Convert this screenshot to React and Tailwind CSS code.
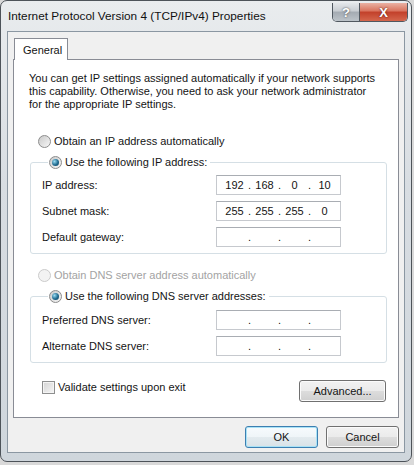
import React from 'react';

// Windows 7 style radio button
function Radio({ checked, disabled }) {
  return (
    <span
      className={`w-[13px] h-[13px] rounded-full border flex items-center justify-center shrink-0 ${
        disabled
          ? 'border-[#cbcbcb] bg-[#f3f3f3]'
          : 'border-[#8c8c8c] bg-[linear-gradient(135deg,#c9c9c9,#f7f7f7)]'
      }`}
    >
      {checked && (
        <span className="w-[7px] h-[7px] rounded-full bg-[radial-gradient(circle_at_35%_35%,#9adcf3,#1f6a8f_55%,#0e3f5a)]" />
      )}
    </span>
  );
}

// Four-part IP address box
function IpField({ value }) {
  const parts = value ? value.split('.') : ['', '', '', ''];
  return (
    <div className="w-[125px] h-[20px] border border-[#c6c9ce] border-t-[#a9adb3] bg-white flex items-center pl-[4px]">
      {parts.map((p, i) => (
        <React.Fragment key={i}>
          {i > 0 && <span className="w-[3px] text-center">.</span>}
          <span className="w-[27px] text-center">{p}</span>
        </React.Fragment>
      ))}
    </div>
  );
}

function FieldRow({ label, value }) {
  return (
    <div className="flex items-center">
      <span className="w-[174px]">{label}</span>
      <IpField value={value} />
    </div>
  );
}

const buttonClass =
  'h-[22px] rounded-[3px] border border-[#707070] bg-[linear-gradient(#f2f2f2_0%,#ebebeb_49%,#dddddd_50%,#cfcfcf_100%)] shadow-[inset_0_0_0_1px_#fbfbfb] flex items-center justify-center';

export default function App() {
  return (
    <div className="w-[414px] h-[465px] bg-[#d9d9d9] overflow-hidden font-['Liberation_Sans',sans-serif] text-[11px] leading-[13px] text-[#141414]">
      {/* Window frame */}
      <div className="w-[412px] h-[462px] rounded-[7px] border border-[#4d5359] bg-[linear-gradient(to_bottom,#e9ecee,#d8dde2_40%,#cfd6dc)] flex flex-col">
        {/* Title bar */}
        <div className="h-[30px] flex items-start pl-[7px]">
          <span className="mt-[9px] text-[11.8px] text-[#111]">Internet Protocol Version 4 (TCP/IPv4) Properties</span>
          <div className="ml-auto mt-[2px] mr-[3px] flex h-[19px] border border-[#505860] border-t-0 rounded-b-[5px] overflow-hidden">
            <div className="w-[27px] h-full bg-[linear-gradient(#e4e7ea_0%,#c8cdd2_45%,#a4abb2_50%,#bcc3c9_100%)] flex items-center justify-center text-white font-bold text-[13px] [text-shadow:0_0_2px_#333] border-r border-[#505860]">
              ?
            </div>
            <div className="w-[47px] h-full bg-[linear-gradient(#eab1a3_0%,#d9735d_45%,#c2402a_50%,#d4664c_100%)] flex items-center justify-center text-white font-bold text-[13px] [text-shadow:0_0_2px_#4a1008]">
              X
            </div>
          </div>
        </div>

        {/* Client area */}
        <div className="mx-[6px] h-[422px] border border-[#8b97a2] bg-[#f0f0f0] flex flex-col px-[5px] pt-[6px]">
          {/* Tab strip */}
          <div className="flex pl-[1px]">
            <div className="relative z-10 -mb-px w-[54px] h-[22px] bg-white border border-[#898c95] border-b-0 pl-[8px] pt-[5px]">
              General
            </div>
          </div>

          {/* Tab panel */}
          <div className="h-[359px] border border-[#898c95] bg-white flex flex-col pt-[12px]">
            <p className="pl-[15px]">
              You can get IP settings assigned automatically if your network supports
              <br />
              this capability. Otherwise, you need to ask your network administrator
              <br />
              for the appropriate IP settings.
            </p>

            <div className="mt-[23px] pl-[24px] flex items-center gap-[3px] h-[14px]">
              <Radio />
              <span>Obtain an IP address automatically</span>
            </div>

            <fieldset className="mt-[7px] ml-[16px] mr-[11px] border border-[#d5dfe5] rounded-[3px] pl-[11px] pr-[44px] pt-[5px] pb-[6px] flex flex-col gap-[6px]">
              <legend className="ml-[6px] pl-[1px] pr-[3px]">
                <span className="flex items-center gap-[3px] h-[15px]">
                  <Radio checked />
                  <span>Use the following IP address:</span>
                </span>
              </legend>
              <FieldRow label="IP address:" value="192.168.0.10" />
              <FieldRow label="Subnet mask:" value="255.255.255.0" />
              <FieldRow label="Default gateway:" />
            </fieldset>

            <div className="mt-[14px] pl-[24px] flex items-center gap-[3px] h-[14px] text-[#a3a3a3]">
              <Radio disabled />
              <span>Obtain DNS server address automatically</span>
            </div>

            <fieldset className="mt-[7px] ml-[16px] mr-[11px] border border-[#d5dfe5] rounded-[3px] pl-[11px] pr-[44px] pt-[6px] pb-[6px] flex flex-col gap-[6px]">
              <legend className="ml-[6px] pl-[1px] pr-[3px]">
                <span className="flex items-center gap-[3px] h-[15px]">
                  <Radio checked />
                  <span>Use the following DNS server addresses:</span>
                </span>
              </legend>
              <FieldRow label="Preferred DNS server:" />
              <FieldRow label="Alternate DNS server:" />
            </fieldset>

            <div className="mt-[17px] flex items-start pl-[28px] pr-[12px]">
              <div className="flex items-center h-[14px]">
                <span className="w-[13px] h-[13px] border border-[#8e8f8f] bg-[linear-gradient(135deg,#d4d4d4,#f6f6f6)] shadow-[inset_0_0_0_1px_#f4f4f4]" />
                <span className="ml-[3px]">Validate settings upon exit</span>
              </div>
              <button className={`ml-auto w-[87px] ${buttonClass}`}>Advanced...</button>
            </div>
          </div>

          {/* Dialog buttons */}
          <div className="mt-[8px] flex justify-end gap-[8px]">
            <button className="w-[73px] h-[22px] rounded-[3px] border border-[#3c7fb1] bg-[linear-gradient(#f7fbfd_0%,#eff5f8_49%,#e3ebef_50%,#d9e2e7_100%)] shadow-[inset_0_0_0_1px_#a9e2f6] flex items-center justify-center">
              OK
            </button>
            <button className={`w-[73px] ${buttonClass}`}>Cancel</button>
          </div>
        </div>
      </div>
    </div>
  );
}
